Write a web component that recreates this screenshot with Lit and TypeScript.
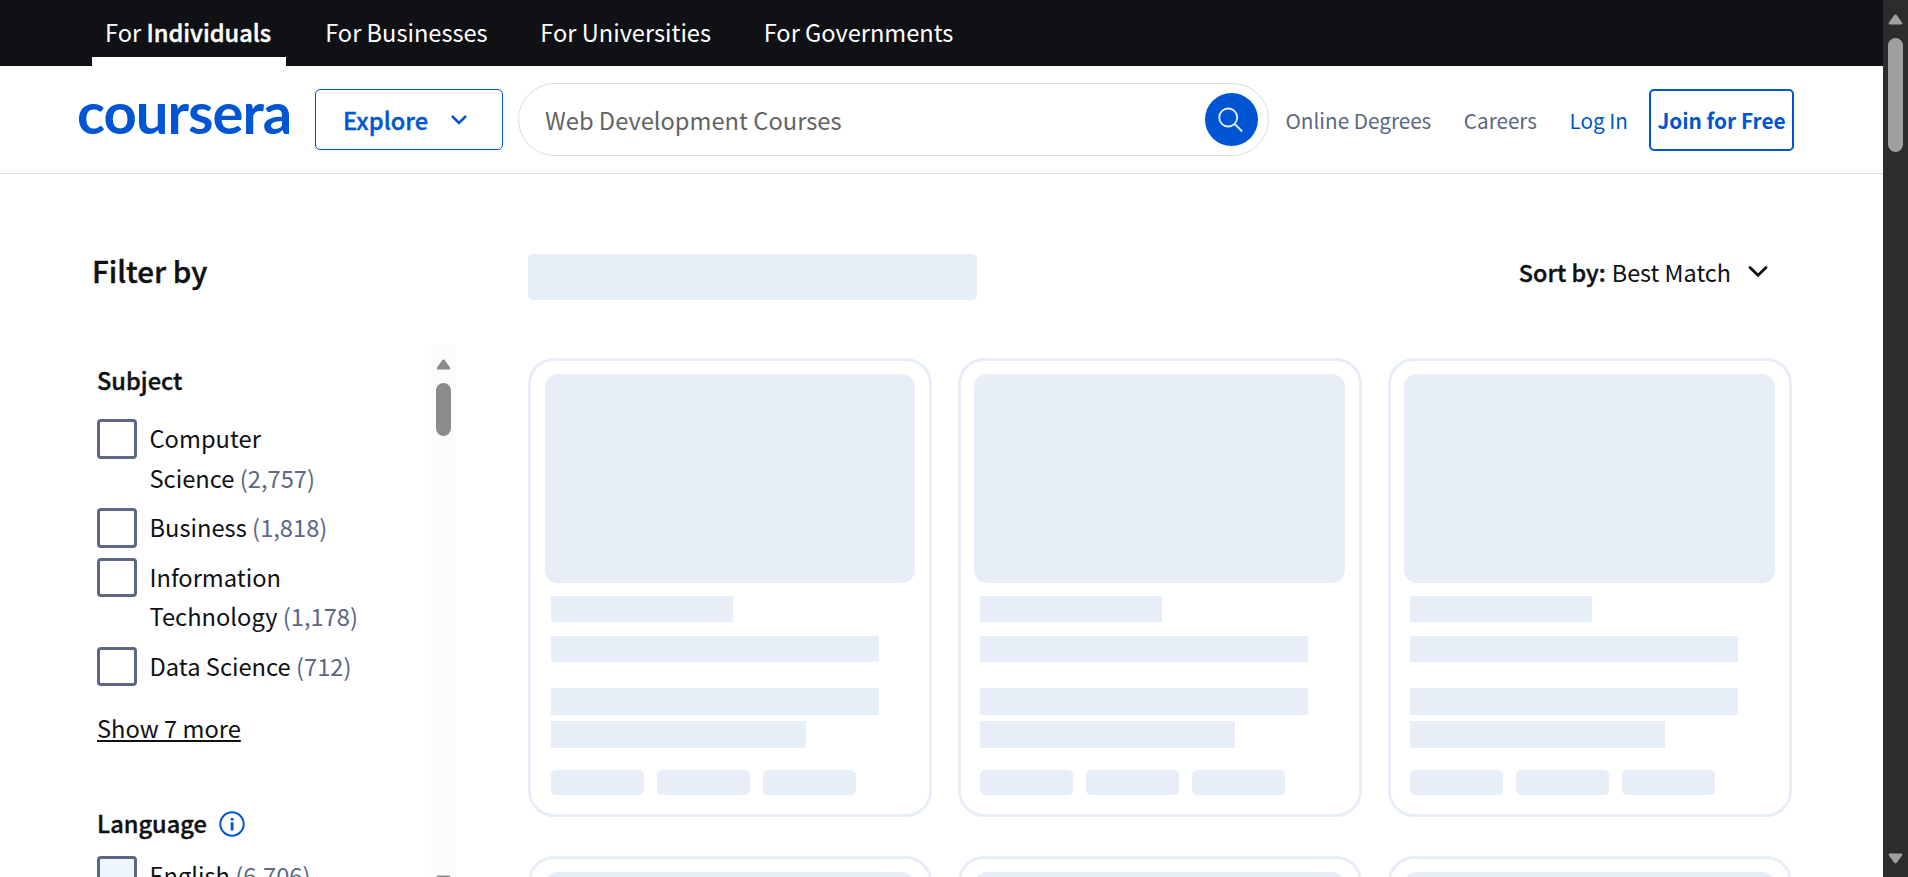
import { LitElement, html, css, nothing } from "lit";
import { customElement } from "lit/decorators.js";
import { classMap } from "lit/directives/class-map.js";

interface Option {
  lines: string[];
  count: string;
  hovered?: boolean;
}

const SUBJECTS: Option[] = [
  { lines: ["Computer", "Science"], count: "2,757" },
  { lines: ["Business"], count: "1,818" },
  { lines: ["Information", "Technology"], count: "1,178" },
  { lines: ["Data Science"], count: "712" },
];
const LANGUAGES: Option[] = [{ lines: ["English"], count: "6,706", hovered: true }];
const AUDIENCES = ["Individuals", "Businesses", "Universities", "Governments"];

@customElement("skeleton-card")
export class SkeletonCard extends LitElement {
  static styles = css`
    :host {
      display: block;
      box-sizing: border-box;
      height: 459px;
      border: 3px solid #e7eef8;
      border-radius: 26px;
      padding: 13px 14px 0 13.5px;
    }
    div { background: #e7eef8; }
    .image { height: 209px; border-radius: 13px; }
    section { display: flex; flex-direction: column; padding: 13px 6px 0; }
    .line { height: 26px; width: 328px; }
    .short { width: 182px; margin-bottom: 14px; }
    .title { margin-bottom: 26px; }
    .body { height: 27px; margin-bottom: 6px; }
    .medium { width: 255px; margin-bottom: 22px; }
    footer { display: flex; gap: 13px; }
    .pill { width: 93px; height: 25px; border-radius: 5px; }
  `;
  render() {
    return html`
      <div class="image"></div>
      <section>
        <div class="line short"></div>
        <div class="line title"></div>
        <div class="line body"></div>
        <div class="line body medium"></div>
        <footer>
          <div class="pill"></div>
          <div class="pill"></div>
          <div class="pill"></div>
        </footer>
      </section>
    `;
  }
}

@customElement("app-root")
export class AppRoot extends LitElement {
  static styles = css`
    :host {
      display: flex;
      width: 1908px;
      height: 877px;
      overflow: hidden;
      background: #fff;
      color: #0f1114;
      font: 400 23.7px/40px "Noto Sans CJK SC", "Noto Sans", sans-serif;
      white-space: nowrap;
    }
    * { box-sizing: border-box; }
    svg { display: block; flex: none; }
    .semi { font-weight: 500; -webkit-text-stroke: 0.4px currentColor; }
    .page { width: 1883px; flex: none; display: flex; flex-direction: column; }

    .audiences {
      display: flex;
      flex: none;
      gap: 26.2px;
      height: 66px;
      padding-left: 92px;
      background: #0f1114;
      color: #fff;
      font-size: 23.6px;
    }
    .audience { padding: 12px 13.5px 0 13px; height: 66px; }
    .audience.active { width: 194px; border-bottom: 9px solid #fff; }

    header {
      display: flex;
      flex: none;
      align-items: flex-start;
      height: 108px;
      padding: 17px 0 0 77px;
      border-bottom: 1px solid #d9dddd;
    }
    .logo {
      width: 238px;
      color: #0056d2;
      font: 700 58px/60px Lato, sans-serif;
      letter-spacing: -1px;
      margin-top: -1px;
    }
    .explore {
      display: flex;
      align-items: center;
      width: 188px;
      height: 61px;
      margin-top: 6px;
      padding: 0 0 0 27px;
      border: 1px solid #0056d2;
      border-radius: 5px;
      color: #0056d2;
    }
    .explore svg { margin-left: 22px; }
    .search {
      display: flex;
      align-items: center;
      width: 751px;
      height: 73px;
      margin-left: 15px;
      padding: 0 10.5px 0 26px;
      border: 1px solid #d9dddd;
      border-radius: 37px;
      color: #636363;
      justify-content: space-between;
      font-size: 23.7px;
    }
    .go {
      width: 53px;
      height: 53px;
      border-radius: 50%;
      background: #0056d2;
      display: grid;
      place-items: center;
    }
    nav {
      display: flex;
      padding: 17px 0 0 16.5px;
      font-size: 20.7px;
      color: #5b6780;
      gap: 32.5px;
      width: 361px;
    }
    .login { color: #0056d2; }
    .join {
      width: 145px;
      height: 62px;
      margin: 6px 0 0 19px;
      border: 2px solid #0056d2;
      border-radius: 5px;
      color: #0056d2;
      font-weight: 700;
      font-size: 20.8px;
      line-height: 58px;
      text-align: center;
    }

    main { display: flex; flex: 1; min-height: 0; }
    aside { width: 528px; padding: 73px 0 0 92px; display: flex; flex-direction: column; }
    h2 { margin: 0; font-size: 29.6px; line-height: 48px; height: 98px; }
    .filters { display: flex; width: 364px; flex: 1; min-height: 0; overflow: hidden; }
    .groups { width: 339px; padding: 15px 0 0 5px; }
    h3 { display: flex; align-items: center; gap: 12.5px; margin: 0 0 19px; font-size: 23.6px; height: 40px; }
    .language { margin-bottom: 13px; }
    .language svg { margin-top: 3px; }
    .option { display: flex; gap: 13px; margin-bottom: 10px; line-height: 39.6px; }
    .box {
      width: 39.5px;
      height: 39.5px;
      flex: none;
      border: 3px solid #5b6785;
      border-radius: 4px;
    }
    .hovered { background: #f0f6ff; }
    .count { color: #5b6785; }
    .more { display: block; margin: 21px 0 55px; text-decoration: underline; text-decoration-thickness: 2px; text-underline-offset: 2px; }
    .track { width: 25px; background: #fcfcfc; padding: 14px 5px 0; overflow: hidden; }
    .handle { height: 53px; border-radius: 8px; background: #8b8b8b; margin: 13px 0 439px; }

    .results { display: flex; flex-direction: column; padding-top: 80px; }
    .toolbar { display: flex; flex: none; justify-content: space-between; height: 104px; width: 1239.5px; }
    .heading { width: 449px; height: 46px; border-radius: 5px; background: #e7eef8; }
    .sort { display: flex; height: 40px; margin-top: -2px; font-size: 23.4px; }
    .sort svg { margin: 13px 0 0 16.5px; }
    .sort .semi { margin-right: 6px; }
    .cards { display: grid; grid-template-columns: repeat(3, 403.6px); column-gap: 26.4px; row-gap: 39px; }

    .scrollbar {
      width: 25px;
      background: #2c2c2c;
      padding: 14px 5px 13px;
      display: flex;
      flex-direction: column;
    }
    .thumb { height: 114px; border-radius: 8px; background: #9f9f9f; margin: 13px 0 auto; }
  `;

  private arrow(fill: string, down = false) {
    const d = down
      ? "M2 0.5H13Q15 0.7 14 2.6L9.2 9.8Q7.5 12 5.8 9.8L1 2.6Q0 0.7 2 0.5Z"
      : "M2 11H13Q15 10.8 14 8.9L9.2 1.7Q7.5-.5 5.8 1.7L1 8.9Q0 10.8 2 11Z";
    return html`<svg width="15" height="11" viewBox="0 0 15 11.5" preserveAspectRatio="none"><path d=${d} fill=${fill} /></svg>`;
  }

  private option(o: Option) {
    return html`<div class="option">
      <span class=${classMap({ box: true, hovered: !!o.hovered })}></span>
      <span>${o.lines.map((l, i) => html`${i ? html`<br />` : nothing}${l}`)} <span class="count">(${o.count})</span></span>
    </div>`;
  }

  render() {
    return html`
      <div class="page">
        <div class="audiences">
          ${AUDIENCES.map(
            (a, i) => html`<div class=${classMap({ audience: true, active: i === 0 })}>For <span class=${i === 0 ? "semi" : ""}>${a}</span></div>`
          )}
        </div>
        <header>
          <div class="logo">coursera</div>
          <div class="explore semi">
            Explore
            <svg width="18" height="12" viewBox="0 0 18 12"><path d="M2 2l7 7 7-7" fill="none" stroke="#0056d2" stroke-width="2.5" /></svg>
          </div>
          <div class="search">
            Web Development Courses
            <span class="go">
              <svg width="26" height="26" viewBox="0 0 26 26" fill="none" stroke="#fff" stroke-opacity="0.9" stroke-width="1.8">
                <circle cx="10.2" cy="10.5" r="9" /><path d="M16.7 17l7.5 7.5" />
              </svg>
            </span>
          </div>
          <nav><span>Online Degrees</span><span>Careers</span><span class="login">Log In</span></nav>
          <div class="join">Join for Free</div>
        </header>
        <main>
          <aside>
            <h2 class="semi">Filter by</h2>
            <div class="filters">
              <div class="groups">
                <h3 class="semi">Subject</h3>
                ${SUBJECTS.map((o) => this.option(o))}
                <span class="more">Show 7 more</span>
                <h3 class="semi language">
                  Language
                  <svg width="26" height="26" viewBox="0 0 26 26">
                    <circle cx="13" cy="13" r="11.7" fill="none" stroke="#0056d2" stroke-width="2" />
                    <path d="M11.7 7h2.8v2.4h-2.8zM11.7 11.2h2.8v8.3h-2.8z" fill="#0056d2" />
                  </svg>
                </h3>
                ${LANGUAGES.map((o) => this.option(o))}
              </div>
              <div class="track">
                ${this.arrow("#8b8b8b")}
                <div class="handle"></div>
                ${this.arrow("#8b8b8b", true)}
              </div>
            </div>
          </aside>
          <div class="results">
            <div class="toolbar">
              <div class="heading"></div>
              <div class="sort">
                <span class="semi">Sort by:</span>Best Match
                <svg width="20" height="13" viewBox="0 0 20 13"><path d="M2 2.5l8 7.8 8-7.8" fill="none" stroke="#0f1114" stroke-width="2.8" stroke-linecap="round" /></svg>
              </div>
            </div>
            <div class="cards">${[0, 1, 2, 3, 4, 5].map(() => html`<skeleton-card></skeleton-card>`)}</div>
          </div>
        </main>
      </div>
      <div class="scrollbar">
        ${this.arrow("#9f9f9f")}
        <div class="thumb"></div>
        ${this.arrow("#9f9f9f", true)}
      </div>
    `;
  }
}
